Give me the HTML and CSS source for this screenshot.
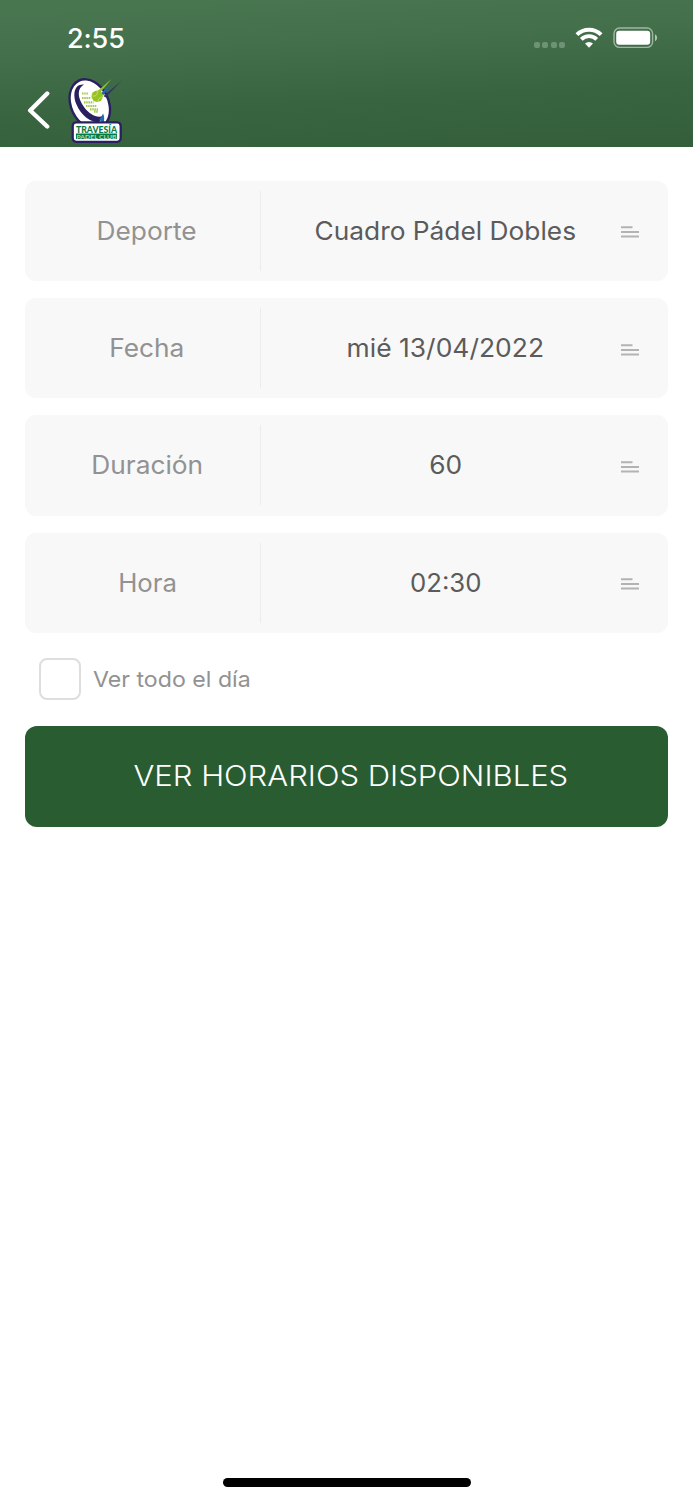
FILE: index.html
```
<!DOCTYPE html>
<html lang="es">
<head>
<meta charset="utf-8">
<title>Travesía Pádel Club</title>
<link rel="stylesheet" href="styles.css">
</head>
<body>
<div class="screen">
  <header class="header">
    <div class="status">
      <span class="clock">2:55</span>
      <div class="indicators">
        <span class="signal"><i></i><i></i><i></i><i></i></span>
        <svg class="wifi" width="28" height="22" viewBox="0 0 28 22" fill="none" stroke="#fff" stroke-width="3.9">
          <path d="M1.900 7.700a17.200 17.200 0 0 1 24.200 0"/>
          <path d="M6.300 12.300a11 11 0 0 1 15.400 0"/>
          <path d="M14 20.700l-4-4.100a5.600 5.600 0 0 1 8 0z" fill="#fff" stroke="none"/>
        </svg>
        <svg class="battery" width="45" height="22" viewBox="0 0 45 22">
          <rect x="1" y="1" width="38.600" height="19.400" rx="5.600" fill="none" stroke="#fff" stroke-opacity=".5" stroke-width="1.400"/>
          <rect x="3.200" y="3.700" width="34" height="14" rx="3" fill="#fff"/>
          <path d="M42 7.300c2.800 1.500 2.800 5.600 0 7z" fill="#fff" fill-opacity=".6"/>
        </svg>
      </div>
    </div>
    <nav class="nav">
      <svg class="back" width="24" height="40" viewBox="0 0 24 40" fill="none" stroke="#fff" stroke-width="4.400" stroke-linecap="round" stroke-linejoin="round"><path d="M20.200 4.500L3.200 21.500 20.200 37.500"/></svg>
      <svg class="logo" width="58" height="68" viewBox="66 77 58 68">
        <g transform="rotate(-25 89.800 104)">
          <ellipse cx="89.800" cy="104" rx="20" ry="27" fill="#29205f"/>
          <ellipse cx="89.800" cy="104" rx="17.600" ry="24.600" fill="#fff"/>
        </g>
        <path d="M84 84.500C74 83.500 72.500 95 76.500 104.500 81 115.500 91 122.500 99 122.500L103 116C97 118.500 89.500 114.500 84 107 77 97.500 77 88.500 84 84.500z" fill="#29205f"/>
        <path d="M97 91.500L111.500 79 99.500 93.500z" fill="#96c31f"/>
        <path d="M101 93L112.500 83 103 95.500z" fill="#2469ad"/>
        <path d="M103.500 96L122 80.500 105.500 97.500z" fill="#33306f"/>
        <path d="M103.200 113.500l-3.800 6 3.800 4c1.500-3 1.200-7 0-10z" fill="#2469ad"/>
        <g stroke="#a7c94b" stroke-width="2.200" stroke-dasharray="1.500 .7">
          <path d="M82 93.500h6M82 98h9M84 102.300h9.500M86 106h11M90 109.300h8M94 111.600h4"/>
        </g>
        <circle cx="97.200" cy="96.300" r="5.700" fill="#96c31f"/>
        <path d="M92.500 96c4 .5 5-1.500 4.800-5M98 102c0-3 1-4 4.500-5" fill="none" stroke="#d4e79b" stroke-width=".7"/>
        <rect x="72.700" y="122.400" width="48" height="19.400" rx="3.500" fill="#fff" stroke="#29205f" stroke-width="2.300"/>
        <rect x="76" y="133.500" width="41" height="5.500" fill="#087b43"/>
        <text class="logo-name" x="76" y="133.200" textLength="41" lengthAdjust="spacingAndGlyphs">TRAVESÍA</text>
        <text class="logo-club" x="76.500" y="138.500" textLength="40" lengthAdjust="spacingAndGlyphs">PADEL CLUB</text>
      </svg>
    </nav>
  </header>
  <main class="form">
    <div class="row">
      <div class="label"><span class="wide">Deporte</span></div><div class="value"><span class="wide">Cuadro Pádel Dobles</span></div>
      <svg class="lines" width="18" height="12" viewBox="0 0 18 12"><path d="M0 1.200h11.500M0 6h18M0 10.500h18"/></svg>
    </div>
    <div class="row">
      <div class="label"><span class="wide">Fecha</span></div><div class="value"><span class="wide date">mié 13/04/2022</span></div>
      <svg class="lines" width="18" height="12" viewBox="0 0 18 12"><path d="M0 1.200h11.500M0 6h18M0 10.500h18"/></svg>
    </div>
    <div class="row">
      <div class="label"><span class="wide">Duración</span></div><div class="value"><span class="wide">60</span></div>
      <svg class="lines" width="18" height="12" viewBox="0 0 18 12"><path d="M0 1.200h11.500M0 6h18M0 10.500h18"/></svg>
    </div>
    <div class="row">
      <div class="label"><span class="wide hora">Hora</span></div><div class="value"><span class="wide time">02:30</span></div>
      <svg class="lines" width="18" height="12" viewBox="0 0 18 12"><path d="M0 1.200h11.500M0 6h18M0 10.500h18"/></svg>
    </div>
    <div class="all-day"><span class="box"></span><span class="all-day-text">Ver todo el día</span></div>
    <div class="submit"><span class="submit-text">VER HORARIOS DISPONIBLES</span></div>
  </main>
  <div class="home"></div>
</div>
</body>
</html>
```
FILE: styles.css
```
body { margin: 0; background: #fff; font-family: Inter, "Liberation Sans", sans-serif; }
.screen { display: flex; flex-direction: column; width: 693px; height: 1500px; overflow: hidden; box-sizing: border-box; padding-bottom: 13.500px; }
.header { height: 147.400px; background: linear-gradient(177deg, #48764f 8%, #44704b 30%, #386540 65%, #335e39 100%); }
.status { display: flex; justify-content: space-between; height: 76px; box-sizing: border-box; padding: 22px 35px 0 67px; }
.clock { color: #fff; font-size: 27px; line-height: 33px; font-weight: 500; letter-spacing: -.1px; }
.indicators { display: flex; align-items: flex-start; padding-top: 5px; }
.signal { display: flex; gap: 2.400px; padding: 14.500px 10px 0 0; }
.signal i { width: 6px; height: 6px; border-radius: 2px; background: #6e9274; }
.battery { margin-left: 10px; }
.nav { display: flex; align-items: flex-start; padding-left: 27px; }
.back { margin-top: 13px; }
.logo { margin: 1px 0 0 15px; }
.logo-name { font: 900 8.500px Lato, sans-serif; fill: #087b43; }
.logo-club { font: 700 6px Lato, sans-serif; fill: #b5dcc5; }
.form { display: flex; flex-direction: column; padding: 33.600px 25.300px 0; }
.row { display: flex; height: 100.200px; margin-bottom: 17px; border-radius: 11px; background: #f8f8f8; align-items: center; }
.label, .value { height: 80px; line-height: 80px; font-size: 25px; text-align: center; white-space: nowrap; padding-left: 8.500px; box-sizing: border-box; }
.label { width: 236px; color: #929292; border-right: 1.500px solid #ececec; }
.value { width: 360px; color: #5b5b5b; }
.wide { display: inline-block; transform: scaleX(1.052); }
.date { transform: scaleX(1.058); }
.hora, .time { transform: scaleX(1.030); }
.lines { display: block; margin-top: 2.500px; fill: none; stroke: #b3b3b3; stroke-width: 1.900px; }
.all-day { display: flex; align-items: center; height: 42px; margin: 8.700px 0 26px 13.400px; }
.box { width: 42px; height: 42px; box-sizing: border-box; border: 2px solid #dedede; border-radius: 8px; }
.all-day-text { margin-left: 12px; font-size: 22px; color: #929292; transform: scaleX(1.052); transform-origin: left; }
.submit { height: 100.200px; border-radius: 12px; background: #295d31; color: #fff; font-size: 28.500px; font-weight: 300; line-height: 99px; text-align: center; padding-left: 8px; white-space: nowrap; }
.submit-text { display: inline-block; transform: scaleX(1.088); }
.home { width: 248px; height: 8.500px; border-radius: 5px; background: #000; margin: auto auto 0; }
```
